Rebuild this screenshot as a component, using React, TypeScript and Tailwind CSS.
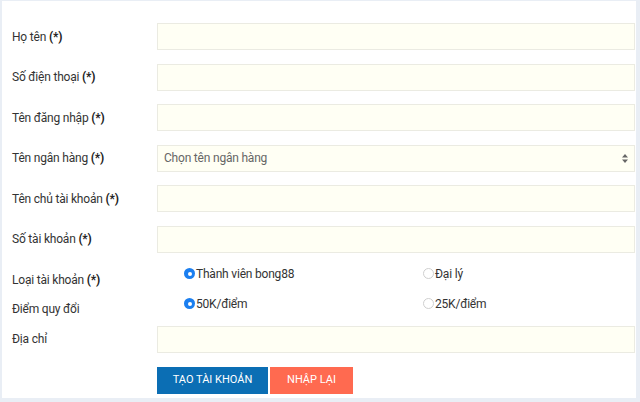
import React from 'react'

const font = { fontFamily: 'Roboto, "Open Sans", Arial, sans-serif' }

const Label = ({ text, req }: { text: string; req?: boolean }) => (
  <div className="w-[145px] shrink-0 text-[12px] tracking-[-0.2px] text-[#333]">
    {text} {req && <b className="font-bold text-[#222]">(*)</b>}
  </div>
)

const Field = ({ label, req = true }: { label: string; req?: boolean }) => (
  <div className="flex items-center h-[27px]">
    <Label text={label} req={req} />
    <div className="flex-1 h-[27px] bg-[#fffff4] border border-[#ebebe2]" />
  </div>
)

const Radio = ({ checked, text }: { checked?: boolean; text: string }) => (
  <div className="flex items-center pl-[27px] h-[16px] text-[12px] tracking-[-0.2px] text-[#333]">
    {checked ? (
      <span className="w-[11px] h-[11px] rounded-full bg-[#1b7ff0] flex items-center justify-center">
        <span className="w-[4px] h-[4px] rounded-full bg-white" />
      </span>
    ) : (
      <span className="w-[11px] h-[11px] rounded-full border border-[#cfcfcf] bg-white" />
    )}
    <span className="ml-[1px]">{text}</span>
  </div>
)

export default function App() {
  return (
    <div className="w-[640px] h-[402px] bg-[#e9eef5] pt-[1px] pl-[2px] pr-[4px] pb-[4px]" style={font}>
      <div className="h-full bg-white pl-[10px] pr-[1px] pt-[22px] flex flex-col">
        <div className="flex flex-col gap-[13.5px]">
          <Field label="Họ tên" />
          <Field label="Số điện thoại" />
          <Field label="Tên đăng nhập" />
          <div className="flex items-center h-[27px]">
            <Label text="Tên ngân hàng" req />
            <div className="flex-1 h-[27px] bg-[#fffff4] border border-[#ebebe2] flex items-center justify-between pl-[6px] pr-[6px] text-[12px] tracking-[-0.2px] text-[#666]">
              <span>Chọn tên ngân hàng</span>
              <svg width="6" height="9" viewBox="0 0 6 9">
                <path d="M3 0 L6 3.5 H0 Z M3 9 L6 5.5 H0 Z" fill="#666" />
              </svg>
            </div>
          </div>
          <Field label="Tên chủ tài khoản" />
          <Field label="Số tài khoản" />
        </div>

        <div className="flex mt-[13px] h-[22px]">
          <div className="pt-[6px] leading-[16px]">
            <Label text="Loại tài khoản" req />
          </div>
          <div className="flex-1 grid grid-cols-2">
            <Radio checked text="Thành viên bong88" />
            <Radio text="Đại lý" />
          </div>
        </div>

        <div className="flex mt-[8px] h-[22px]">
          <div className="pt-[5px] leading-[16px]">
            <Label text="Điểm quy đổi" />
          </div>
          <div className="flex-1 grid grid-cols-2">
            <Radio checked text="50K/điểm" />
            <Radio text="25K/điểm" />
          </div>
        </div>

        <div className="mt-[8px]">
          <Field label="Địa chỉ" req={false} />
        </div>

        <div className="flex mt-[14px] pl-[145px] gap-[2px]">
          <button className="w-[111px] h-[27px] bg-[#0b6eb4] text-white text-[11px]">TẠO TÀI KHOẢN</button>
          <button className="w-[83px] h-[27px] bg-[#ff6a50] text-white text-[11px]">NHẬP LẠI</button>
        </div>
      </div>
    </div>
  )
}
